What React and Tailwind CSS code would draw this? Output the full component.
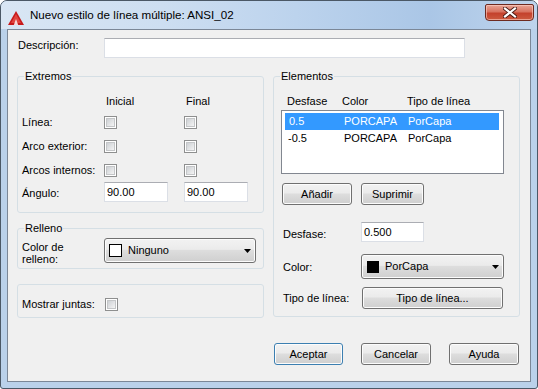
import React from "react";

const btn =
  "flex items-center justify-center rounded-[3px] border border-[#707070] bg-[linear-gradient(#f2f2f2_0%,#ebebeb_45%,#dddddd_50%,#cfcfcf_100%)] shadow-[inset_0_0_0_1px_#fcfcfc] text-black";

function CheckBox() {
  return (
    <div className="w-[13px] h-[13px] border border-[#8e8f8f] bg-white p-[1px]">
      <div className="w-full h-full border border-[#c4c6c8] bg-[linear-gradient(135deg,#cdd0d4,#f4f4f4)]" />
    </div>
  );
}

function TextBox({ w, h = 20, value }) {
  return (
    <div
      className="bg-white border border-[#dbdfe6] border-t-[#abadb3] pl-[2px] flex items-center"
      style={{ width: w, height: h }}
    >
      {value}
    </div>
  );
}

function Arrow() {
  return (
    <svg width="7" height="4" viewBox="0 0 7 4" className="ml-auto mr-[4px]">
      <path d="M0 0H7L3.5 4Z" fill="#000" />
    </svg>
  );
}

export default function App() {
  return (
    <div className="font-['Liberation_Sans',Arial,sans-serif] text-[11px] leading-[13px] text-black">
      <div className="w-[538px] h-[389px] rounded-t-[7px] rounded-b-[3px] border border-[#4b5866] bg-[#bad1ea] flex flex-col overflow-hidden">
        {/* Title bar */}
        <div className="h-[28px] flex items-start bg-[linear-gradient(90deg,#d9e6f4_0%,#cddef1_30%,#bcd3ed_55%,#aac6e6_80%,#bed4ec_100%)]">
          <svg width="16" height="14" viewBox="0 0 16 14" className="ml-[7px] mt-[10px]">
            <polygon points="8,0 16,14 0,14" fill="#c7191b" />
            <polygon points="8,3 13,12 3,12" fill="#e0443f" />
            <polygon points="8,8 10.2,14 5.8,14" fill="#f6d8d8" />
          </svg>
          <div className="ml-[6px] mt-[7px] text-[11.6px] leading-[14px] text-black">
            Nuevo estilo de línea múltiple: ANSI_02
          </div>
          <div className="ml-auto mr-[3px] mt-[3px] w-[49px] h-[17px] rounded-b-[4px] rounded-t-[2px] border border-[#6d2a20] bg-[linear-gradient(#e8a596_0%,#d8725f_45%,#c4412c_55%,#cc5a3f_100%)] shadow-[inset_0_0_0_1px_rgba(255,210,200,0.6)] flex items-center justify-center">
            <svg width="14" height="11" viewBox="0 0 14 11">
              <path d="M2 1.5L12 9.5M12 1.5L2 9.5" stroke="#4a1a14" strokeWidth="4" strokeLinecap="square" />
              <path d="M2 1.5L12 9.5M12 1.5L2 9.5" stroke="#ffffff" strokeWidth="2.2" strokeLinecap="square" />
            </svg>
          </div>
        </div>

        {/* Client area */}
        <div className="mx-[6px] h-[353px] border border-[#7b8797] bg-[#f0f0f0] flex flex-col">
          {/* Description */}
          <div className="mt-[8px] flex items-start">
            <div className="ml-[10px] w-[86px] mt-[1px]">Descripción:</div>
            <TextBox w={361} />
          </div>

          {/* Columns */}
          <div className="mt-[12px] ml-[9px] flex items-start gap-[9px]">
            {/* Left column */}
            <div className="w-[247px] flex flex-col">
              <fieldset className="h-[143px] border border-[#d5dfe5] rounded-[3px]">
                <legend className="ml-[6px] px-[1px] leading-[13px]">Extremos</legend>
                <div className="mt-[11px] flex h-[14px] items-center">
                  <div className="w-[86px]" />
                  <div className="w-[80px] pl-[2px]">Inicial</div>
                  <div className="pl-[2px]">Final</div>
                </div>
                {["Línea:", "Arco exterior:", "Arcos internos:"].map((l, i) => (
                  <div key={l} className={`flex h-[13px] items-center ${i === 0 ? "mt-[8px]" : "mt-[11px]"}`}>
                    <div className="w-[86px] pl-[4px]">{l}</div>
                    <div className="w-[80px]">
                      <CheckBox />
                    </div>
                    <CheckBox />
                  </div>
                ))}
                <div className="mt-[5px] flex items-center">
                  <div className="w-[86px] pl-[4px] pt-[2px]">Ángulo:</div>
                  <div className="w-[80px]">
                    <TextBox w={64} value="90.00" />
                  </div>
                  <TextBox w={64} value="90.00" />
                </div>
              </fieldset>

              <fieldset className="mt-[9px] h-[47px] border border-[#d5dfe5] rounded-[3px]">
                <legend className="ml-[6px] px-[1px] leading-[13px]">Relleno</legend>
                <div className="mt-[3px] flex items-start">
                  <div className="w-[86px] pl-[4px] mt-[3px] leading-[12px]">
                    Color de
                    <br />
                    relleno:
                  </div>
                  <div className={`${btn} !justify-start w-[152px] h-[25px]`}>
                    <div className="ml-[4px] w-[13px] h-[13px] border border-black bg-white" />
                    <span className="ml-[6px]">Ninguno</span>
                    <Arrow />
                  </div>
                </div>
              </fieldset>

              <div className="mt-[15px] h-[34px] border border-[#d5dfe5] rounded-[3px] pt-[13px] flex items-start">
                <div className="w-[87px] pl-[4px] leading-[13px]">Mostrar juntas:</div>
                <CheckBox />
              </div>
            </div>

            {/* Right column */}
            <fieldset className="w-[247px] h-[247px] border border-[#d5dfe5] rounded-[3px]">
              <legend className="ml-[6px] px-[1px] leading-[13px]">Elementos</legend>
              <div className="mt-[11px] h-[14px] flex items-center pl-[13px]">
                <div className="w-[55px]">Desfase</div>
                <div className="w-[65px]">Color</div>
                <div>Tipo de línea</div>
              </div>
              <div className="mt-[2px] ml-[7px] w-[223px] h-[64px] border border-[#828790] bg-white pt-[2px] pl-[3px]">
                <div className="w-[214px] h-[17px] bg-[#3399ff] text-white flex items-center pl-[4px]">
                  <div className="w-[55px]">0.5</div>
                  <div className="w-[64px]">PORCAPA</div>
                  <div>PorCapa</div>
                </div>
                <div className="w-[214px] h-[17px] flex items-center pl-[3px]">
                  <div className="w-[56px]">-0.5</div>
                  <div className="w-[64px]">PORCAPA</div>
                  <div>PorCapa</div>
                </div>
              </div>
              <div className="mt-[9px] ml-[8px] flex gap-[9px]">
                <div className={`${btn} w-[70px] h-[22px]`}>Añadir</div>
                <div className={`${btn} w-[63px] h-[22px]`}>Suprimir</div>
              </div>
              <div className="mt-[17px] ml-[9px] flex items-start">
                <div className="w-[78px] mt-[6px]">Desfase:</div>
                <TextBox w={63} value="0.500" />
              </div>
              <div className="mt-[12px] ml-[9px] flex items-center">
                <div className="w-[78px] pt-[2px]">Color:</div>
                <div className={`${btn} !justify-start w-[143px] h-[25px]`}>
                  <div className="ml-[5px] w-[12px] h-[12px] bg-black" />
                  <span className="ml-[6px]">PorCapa</span>
                  <Arrow />
                </div>
              </div>
              <div className="mt-[8px] ml-[9px] flex items-center">
                <div className="w-[79px]">Tipo de línea:</div>
                <div className={`${btn} w-[141px] h-[22px]`}>Tipo de línea...</div>
              </div>
            </fieldset>
          </div>

          {/* Bottom buttons */}
          <div className="mt-[25px] ml-[266px] flex gap-[18px]">
            <div className={`${btn} !border-[#3c7fb1] shadow-[inset_0_0_0_1px_#6fd6f8,inset_0_0_0_2px_#c8effc] w-[69px] h-[22px]`}>
              Aceptar
            </div>
            <div className={`${btn} w-[70px] h-[22px]`}>Cancelar</div>
            <div className={`${btn} w-[70px] h-[22px]`}>Ayuda</div>
          </div>
        </div>
      </div>
    </div>
  );
}
